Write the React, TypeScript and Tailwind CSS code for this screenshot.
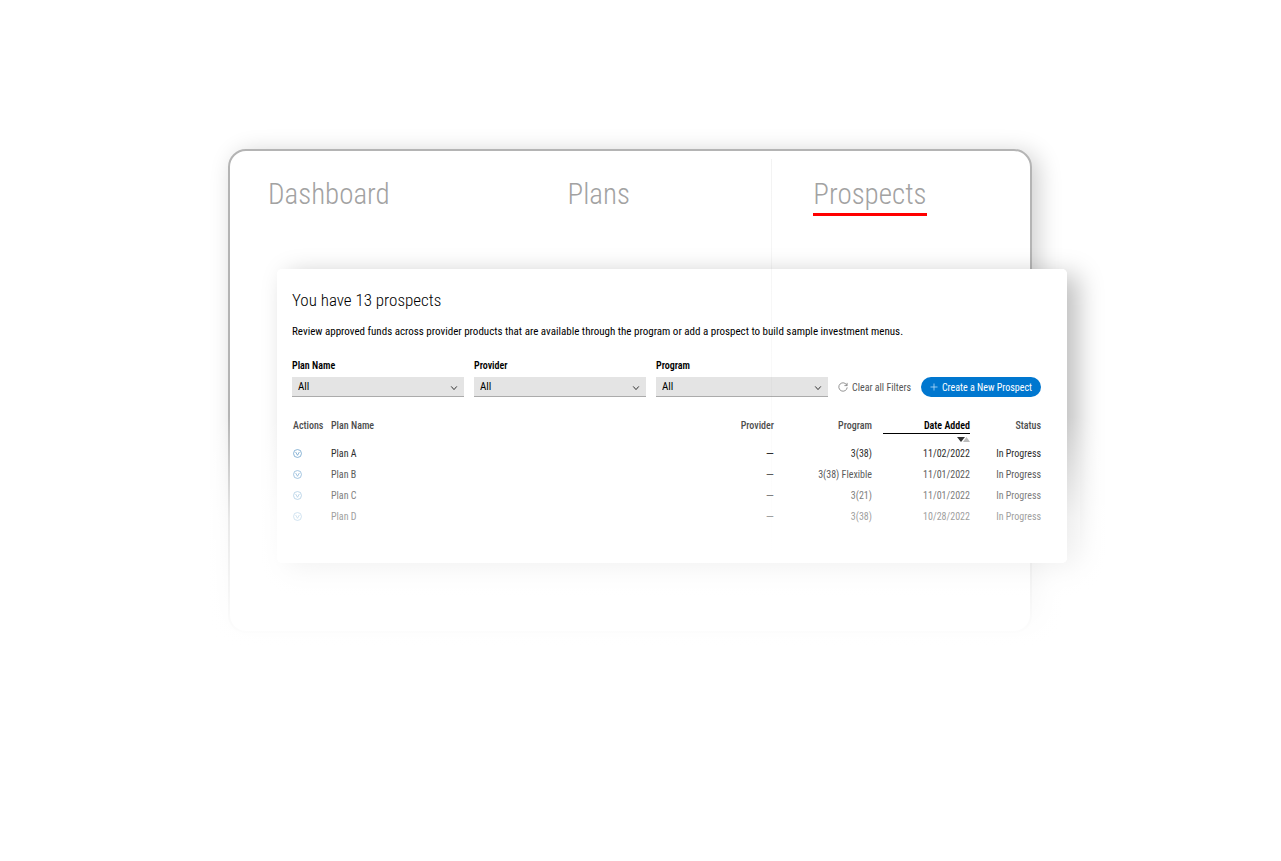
const tabs = [
  { name: 'Dashboard', active: false },
  { name: 'Plans', active: false },
  { name: 'Prospects', active: true },
];

const filters = [
  { id: 'plan-name', label: 'Plan Name' },
  { id: 'provider', label: 'Provider' },
  { id: 'program', label: 'Program' },
];

const prospects = [
  { plan: 'Plan A', program: '3(38)', date: '11/02/2022', tone: 'text-[#2e2e2e]', icon: 'text-[#6fa3cc]' },
  { plan: 'Plan B', program: '3(38) Flexible', date: '11/01/2022', tone: 'text-[#5c5c5c]', icon: 'text-[#8fb9da]' },
  { plan: 'Plan C', program: '3(21)', date: '11/01/2022', tone: 'text-[#808080]', icon: 'text-[#afcde4]' },
  { plan: 'Plan D', program: '3(38)', date: '10/28/2022', tone: 'text-[#a0a0a0]', icon: 'text-[#c6dced]' },
];

function Tabs() {
  return (
    <nav className="grid grid-cols-[300fr_246fr_217fr] pt-[22px] pl-[38px]">
      {tabs.map((tab) => (
        <div key={tab.name}>
          <a
            href="#"
            className={`inline-block h-[43px] text-[29px] leading-[42px] font-light ${
              tab.active ? 'border-b-[3px] border-[#ff0000]' : ''
            }`}
          >
            {tab.name}
          </a>
        </div>
      ))}
    </nav>
  );
}

function Filter({ id, label }: { id: string; label: string }) {
  return (
    <div className="min-w-0 flex-1">
      <label htmlFor={id} className="block pb-[3px] text-[10px] leading-4 font-semibold">
        {label}
      </label>
      <div className="relative">
        <select
          id={id}
          className="block h-5 w-full appearance-none border-b border-[#ababab] bg-[#e4e4e4] px-[6px] pt-px text-[11px] leading-4"
        >
          <option>All</option>
        </select>
        <svg viewBox="0 0 8 8" className="pointer-events-none absolute top-[7px] right-[6px] size-2" fill="none" stroke="#333" strokeWidth="1">
          <path d="M1.2 2.4 4 5.6 6.8 2.4" />
        </svg>
      </div>
    </div>
  );
}

function FilterBar() {
  return (
    <form className="flex items-end gap-[10px]">
      {filters.map((f) => (
        <Filter key={f.id} id={f.id} label={f.label} />
      ))}
      <button type="reset" className="flex h-5 w-[69px] items-center gap-1 text-[10px] whitespace-nowrap text-[#555]">
        <svg viewBox="0 0 10 10" className="size-[10px] shrink-0" fill="none" stroke="#7a7a7a" strokeWidth="0.8">
          <path d="M8.9 3.4A4.2 4.2 0 1 0 9.2 5.4M9.1 0.9v2.7H6.4" />
        </svg>
        Clear all Filters
      </button>
      <button
        type="button"
        className="ml-1 flex h-5 w-[120px] items-center justify-center gap-1 rounded-full bg-[#0077cf] text-[10px] whitespace-nowrap text-white"
      >
        <svg viewBox="0 0 8 8" className="size-2" fill="none" stroke="#b5dcf8" strokeWidth="0.8">
          <path d="M4 0.5v7M0.5 4h7" />
        </svg>
        Create a New Prospect
      </button>
    </form>
  );
}

function ProspectTable() {
  return (
    <table className="mt-[21px] w-full table-fixed text-[10px] leading-4">
      <colgroup>
        <col className="w-[39px]" />
        <col />
        <col className="w-[60px]" />
        <col className="w-[98px]" />
        <col className="w-[98px]" />
        <col className="w-[71px]" />
      </colgroup>
      <thead>
        <tr className="h-[25px] align-top text-[#4d4d4d]">
          <th className="pl-px text-left font-medium">Actions</th>
          <th className="text-left font-medium">Plan Name</th>
          <th className="text-right font-medium">Provider</th>
          <th className="text-right font-medium">Program</th>
          <th className="pl-[11px] font-semibold text-black" aria-sort="descending">
            <button type="button" className="block h-4 w-full border-b border-black text-right">
              Date Added
            </button>
            <svg viewBox="0 0 13 5" className="mt-[3px] ml-auto h-[5px] w-[13px]">
              <path d="M6 5h7L9.500 0z" fill="#bbb" />
              <path d="M0 0h8L4 5z" fill="#333" />
            </svg>
          </th>
          <th className="text-right font-medium">Status</th>
        </tr>
      </thead>
      <tbody>
        {prospects.map((p) => (
          <tr key={p.plan} className={`h-[21px] text-right ${p.tone}`}>
            <td className={`pl-px ${p.icon}`}>
              <button type="button" aria-label={`Actions for ${p.plan}`} className="block">
                <svg viewBox="0 0 10 10" className="size-[9px]" fill="none" stroke="currentColor" strokeWidth="0.9">
                  <circle cx="5" cy="5" r="4.4" />
                  <path d="M2.900 3.300 5 7 7.100 3.300" />
                </svg>
              </button>
            </td>
            <td className="text-left">{p.plan}</td>
            <td className="text-[12px]">—</td>
            <td>{p.program}</td>
            <td>{p.date}</td>
            <td>In Progress</td>
          </tr>
        ))}
      </tbody>
    </table>
  );
}

export default function App() {
  return (
    <main className='min-h-screen bg-white pt-[149px] pr-[249px] pb-16 pl-[228px] font-["Roboto_Condensed","Roboto",sans-serif] text-black'>
      <section className="relative isolate rounded-[18px] border-2 border-[#b4b4b4] bg-white pb-[68px] text-[#a2a2a2] shadow-[6px_4px_24px_rgba(0,0,0,0.2)]">
        <Tabs />

        <div className="relative mt-[53px] -mr-[37px] ml-[47px]">
          <div className="absolute inset-0 rounded-[5px] bg-white shadow-[11px_6px_26px_rgba(0,0,0,0.26)]" />
          <div className="relative z-20 rounded-[5px] bg-white pt-[19px] pr-[26px] pb-[36px] pl-[15px] text-black">
            <h1 className="text-[17px] leading-6 font-light">You have 13 prospects</h1>
            <p className="mt-3 mb-[18px] text-[11px] leading-4">
              Review approved funds across provider products that are available through the program or add a prospect to build sample investment menus.
            </p>
            <FilterBar />
            <ProspectTable />
          </div>
        </div>

        {/* the frame and both shadows dissolve toward the bottom */}
        <div className="pointer-events-none absolute top-[265px] -right-[50px] -bottom-10 -left-10 z-10 bg-linear-to-b from-transparent via-white/70 via-40% to-white to-90%" />
        <div className="pointer-events-none absolute top-[265px] -right-[90px] -bottom-10 z-10 w-10 bg-linear-to-b from-transparent to-white to-70%" />
        {/* hairline */}
        <div className="pointer-events-none absolute top-2 bottom-16 left-[68%] z-30 -ml-[3px] w-px bg-linear-to-b from-black/5 to-transparent" />
      </section>
    </main>
  );
}
